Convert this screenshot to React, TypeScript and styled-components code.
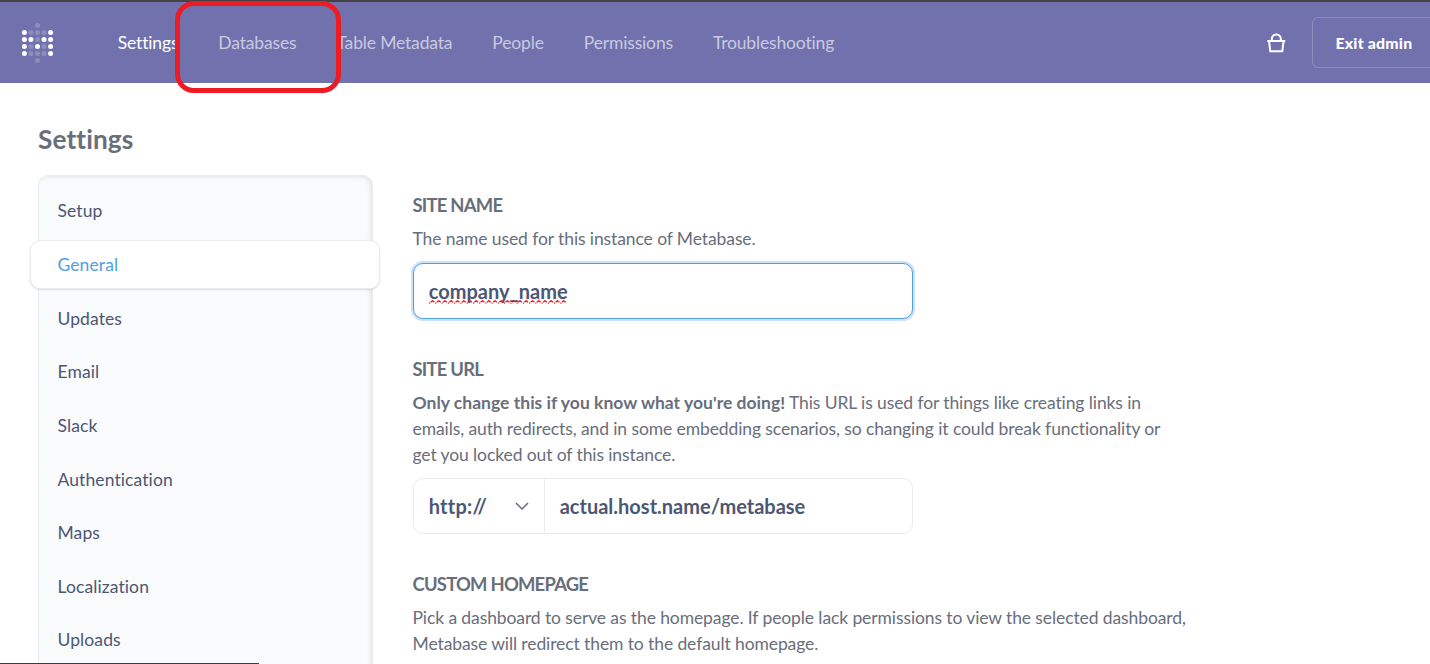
import React from "react";
import styled, { createGlobalStyle } from "styled-components";

const GlobalStyle = createGlobalStyle`
  *, *::before, *::after { box-sizing: border-box; }
  body { margin: 0; background: #fff; font-family: Lato, "Open Sans", sans-serif; font-size: 17.5px; font-variant-ligatures: none; color: #4c5773; overflow: hidden; }
  h1, h2, p, ul { margin: 0; padding: 0; }
  ul { list-style: none; }
`;

const Page = styled.div`
  height: 664px;
  overflow: hidden;
  position: relative;
`;

const Header = styled.header`
  display: flex;
  align-items: center;
  height: 83px;
  padding: 0 0 0 20px;
  border-top: 2px solid #444345;
  background: #7172ad;
  overflow: hidden;
`;

const Logo = styled.svg`
  flex: none;
  width: 35px;
  height: 42px;
`;

const Nav = styled.nav`
  display: flex;
  gap: 40px;
  margin-left: 62.8px;
  flex: 1;
`;

const NavLink = styled.a<{ $active?: boolean }>`
  color: ${(p) => (p.$active ? "#fff" : "rgba(255, 255, 255, 0.63)")};
  letter-spacing: -0.16px;
  line-height: 26px;
  white-space: nowrap;
`;

const StoreIcon = styled.svg`
  flex: none;
  width: 20px;
  height: 20px;
  margin-right: 26px;
`;

const ExitButton = styled.a`
  flex: none;
  width: 125px;
  height: 51px;
  margin-right: -7px;
  padding-left: 22.5px;
  border: 1px solid rgba(255, 255, 255, 0.2);
  border-radius: 6px;
  color: #fff;
  font-size: 15.8px;
  font-weight: 900;
  letter-spacing: 0.2px;
  line-height: 49px;
  white-space: nowrap;
`;

const Title = styled.h1`
  padding: 40px 0 0 38px;
  color: #696e7b;
  font-size: 26.25px;
  font-weight: 700;
  letter-spacing: 0.1px;
  line-height: 32px;
`;

const Columns = styled.main`
  display: flex;
  align-items: flex-start;
  gap: 39.5px;
  padding: 20px 0 0 38px;
`;

const Sidebar = styled.ul`
  flex: none;
  width: 335px;
  height: 620px;
  padding-top: 10.3px;
  border: 1px solid #ebebed;
  border-radius: 10px;
  background: #f9fbfc;
  box-shadow: inset -2px 1px 4px rgba(0, 0, 0, 0.09);
`;

const SideItem = styled.li<{ $active?: boolean }>`
  height: 49px;
  margin: ${(p) => (p.$active ? "0 -8px 4.65px -9px" : "0 0 4.65px")};
  padding-left: ${(p) => (p.$active ? "26.5px" : "18.5px")};
  border: 1px solid ${(p) => (p.$active ? "#ebebed" : "transparent")};
  border-left-width: ${(p) => (p.$active ? "1px" : "0")};
  border-radius: 10px;
  background: ${(p) => (p.$active ? "#fff" : "none")};
  box-shadow: ${(p) => (p.$active ? "0 1px 2px rgba(0, 0, 0, 0.13)" : "none")};
  color: ${(p) => (p.$active ? "#509ee3" : "#4c5773")};
  letter-spacing: 0.1px;
  line-height: 47px;
`;

const Form = styled.section`
  width: 800px;
  padding-top: 16px;
`;

const Setting = styled.div`
  margin-bottom: 36px;
`;

const Label = styled.h2`
  color: #696e7b;
  font-size: 18.4px;
  font-weight: 700;
  letter-spacing: -0.75px;
  line-height: 28px;
  text-transform: uppercase;
`;

const Description = styled.p`
  margin: 7px 0 10.6px;
  color: #696e7b;
  letter-spacing: -0.1px;
  line-height: 26px;
  white-space: nowrap;

  b {
    letter-spacing: 0.02px;
  }
`;

const FieldBox = styled.div<{ $focused?: boolean }>`
  display: flex;
  width: 500px;
  height: 56px;
  margin-left: 0.5px;
  border: 1px solid ${(p) => (p.$focused ? "#509ee3" : "#ebebed")};
  border-radius: 10px;
  background: #fff;
  box-shadow: ${(p) => (p.$focused ? "0 0 0 2px #cbe2f7" : "none")};
  font-size: 20px;
  font-weight: 700;
  line-height: 55px;
`;

const Value = styled.span`
  position: relative;
  margin-left: 14.7px;
`;

const Squiggle = styled.svg`
  position: absolute;
  left: 0;
  top: 36px;
  width: 138px;
  height: 4px;
`;

const Protocol = styled.div`
  display: flex;
  align-items: center;
  justify-content: space-between;
  width: 131px;
  padding: 0 15px 0 14.7px;
  border-right: 1px solid #ebebed;
  letter-spacing: 0.25px;
`;

const Highlight = styled.div`
  position: absolute;
  left: 175px;
  top: 1px;
  width: 166px;
  height: 92px;
  border: 5px solid #ed1c24;
  border-radius: 19px;
`;

const StatusEdge = styled.div`
  position: absolute;
  left: 0;
  bottom: 0;
  width: 259px;
  height: 1px;
  background: #3c3c3f;
`;

const logoRows = ["..o..", "xooox", "xxoxx", "xoxox", "xooox", "..o.."];
const navItems = ["Settings", "Databases", "Table Metadata", "People", "Permissions", "Troubleshooting"];
const sideItems = ["Setup", "General", "Updates", "Email", "Slack", "Authentication", "Maps", "Localization", "Uploads"];
const squigglePath = Array.from({ length: 22 }, (_, i) => `M${(1.6 + i * 6.25).toFixed(2)} 2.3l1.9-1.6 1.9 1.6M${(0.1 + i * 6.25).toFixed(2)} 3.2h1.1`).join("");

export default function App() {
  return (
    <Page>
      <GlobalStyle />
      <Header>
        <Logo viewBox="0 0 35 42">
          {logoRows.flatMap((row, y) =>
            [...row].map((dot, x) =>
              dot === "." ? null : (
                <circle key={`${x}-${y}`} cx={4.4 + x * 6.55} cy={3.4 + y * 7} r={2.5} fill="#fff" opacity={dot === "x" ? 1 : 0.2} />
              ),
            ),
          )}
        </Logo>
        <Nav>
          {navItems.map((item, i) => (
            <NavLink key={item} $active={i === 0}>{item}</NavLink>
          ))}
        </Nav>
        <StoreIcon viewBox="0 0 20 20" fill="none" stroke="#fff" strokeWidth="2">
          <path d="M1.3 8h18M3 8l1.3 10.3h12L17.6 8M5.8 8V6a4.5 4.5 0 0 1 9 0v2" />
        </StoreIcon>
        <ExitButton>Exit admin</ExitButton>
      </Header>
      <Title>Settings</Title>
      <Columns>
        <Sidebar>
          {sideItems.map((item) => (
            <SideItem key={item} $active={item === "General"}>{item}</SideItem>
          ))}
        </Sidebar>
        <Form>
          <Setting>
            <Label>Site name</Label>
            <Description>The name used for this instance of Metabase.</Description>
            <FieldBox $focused>
              <Value>
                company_name
                <Squiggle viewBox="0 0 138 4" fill="none" stroke="#f0141e" strokeWidth="1.3">
                  <path d={squigglePath} />
                </Squiggle>
              </Value>
            </FieldBox>
          </Setting>
          <Setting>
            <Label>Site URL</Label>
            <Description>
              <b>Only change this if you know what you're doing!</b> This URL is used for things like creating links in
              <br />
              emails, auth redirects, and in some embedding scenarios, so changing it could break functionality or
              <br />
              get you locked out of this instance.
            </Description>
            <FieldBox>
              <Protocol>
                http://
                <svg width="14" height="8" viewBox="0 0 14 8" fill="none" stroke="#696e7b" strokeWidth="1.5">
                  <path d="M1 1l6 6 6-6" />
                </svg>
              </Protocol>
              <Value>actual.host.name/metabase</Value>
            </FieldBox>
          </Setting>
          <Setting>
            <Label>Custom homepage</Label>
            <Description>
              Pick a dashboard to serve as the homepage. If people lack permissions to view the selected dashboard,
              <br />
              Metabase will redirect them to the default homepage.
            </Description>
          </Setting>
        </Form>
      </Columns>
      <Highlight />
      <StatusEdge />
    </Page>
  );
}
